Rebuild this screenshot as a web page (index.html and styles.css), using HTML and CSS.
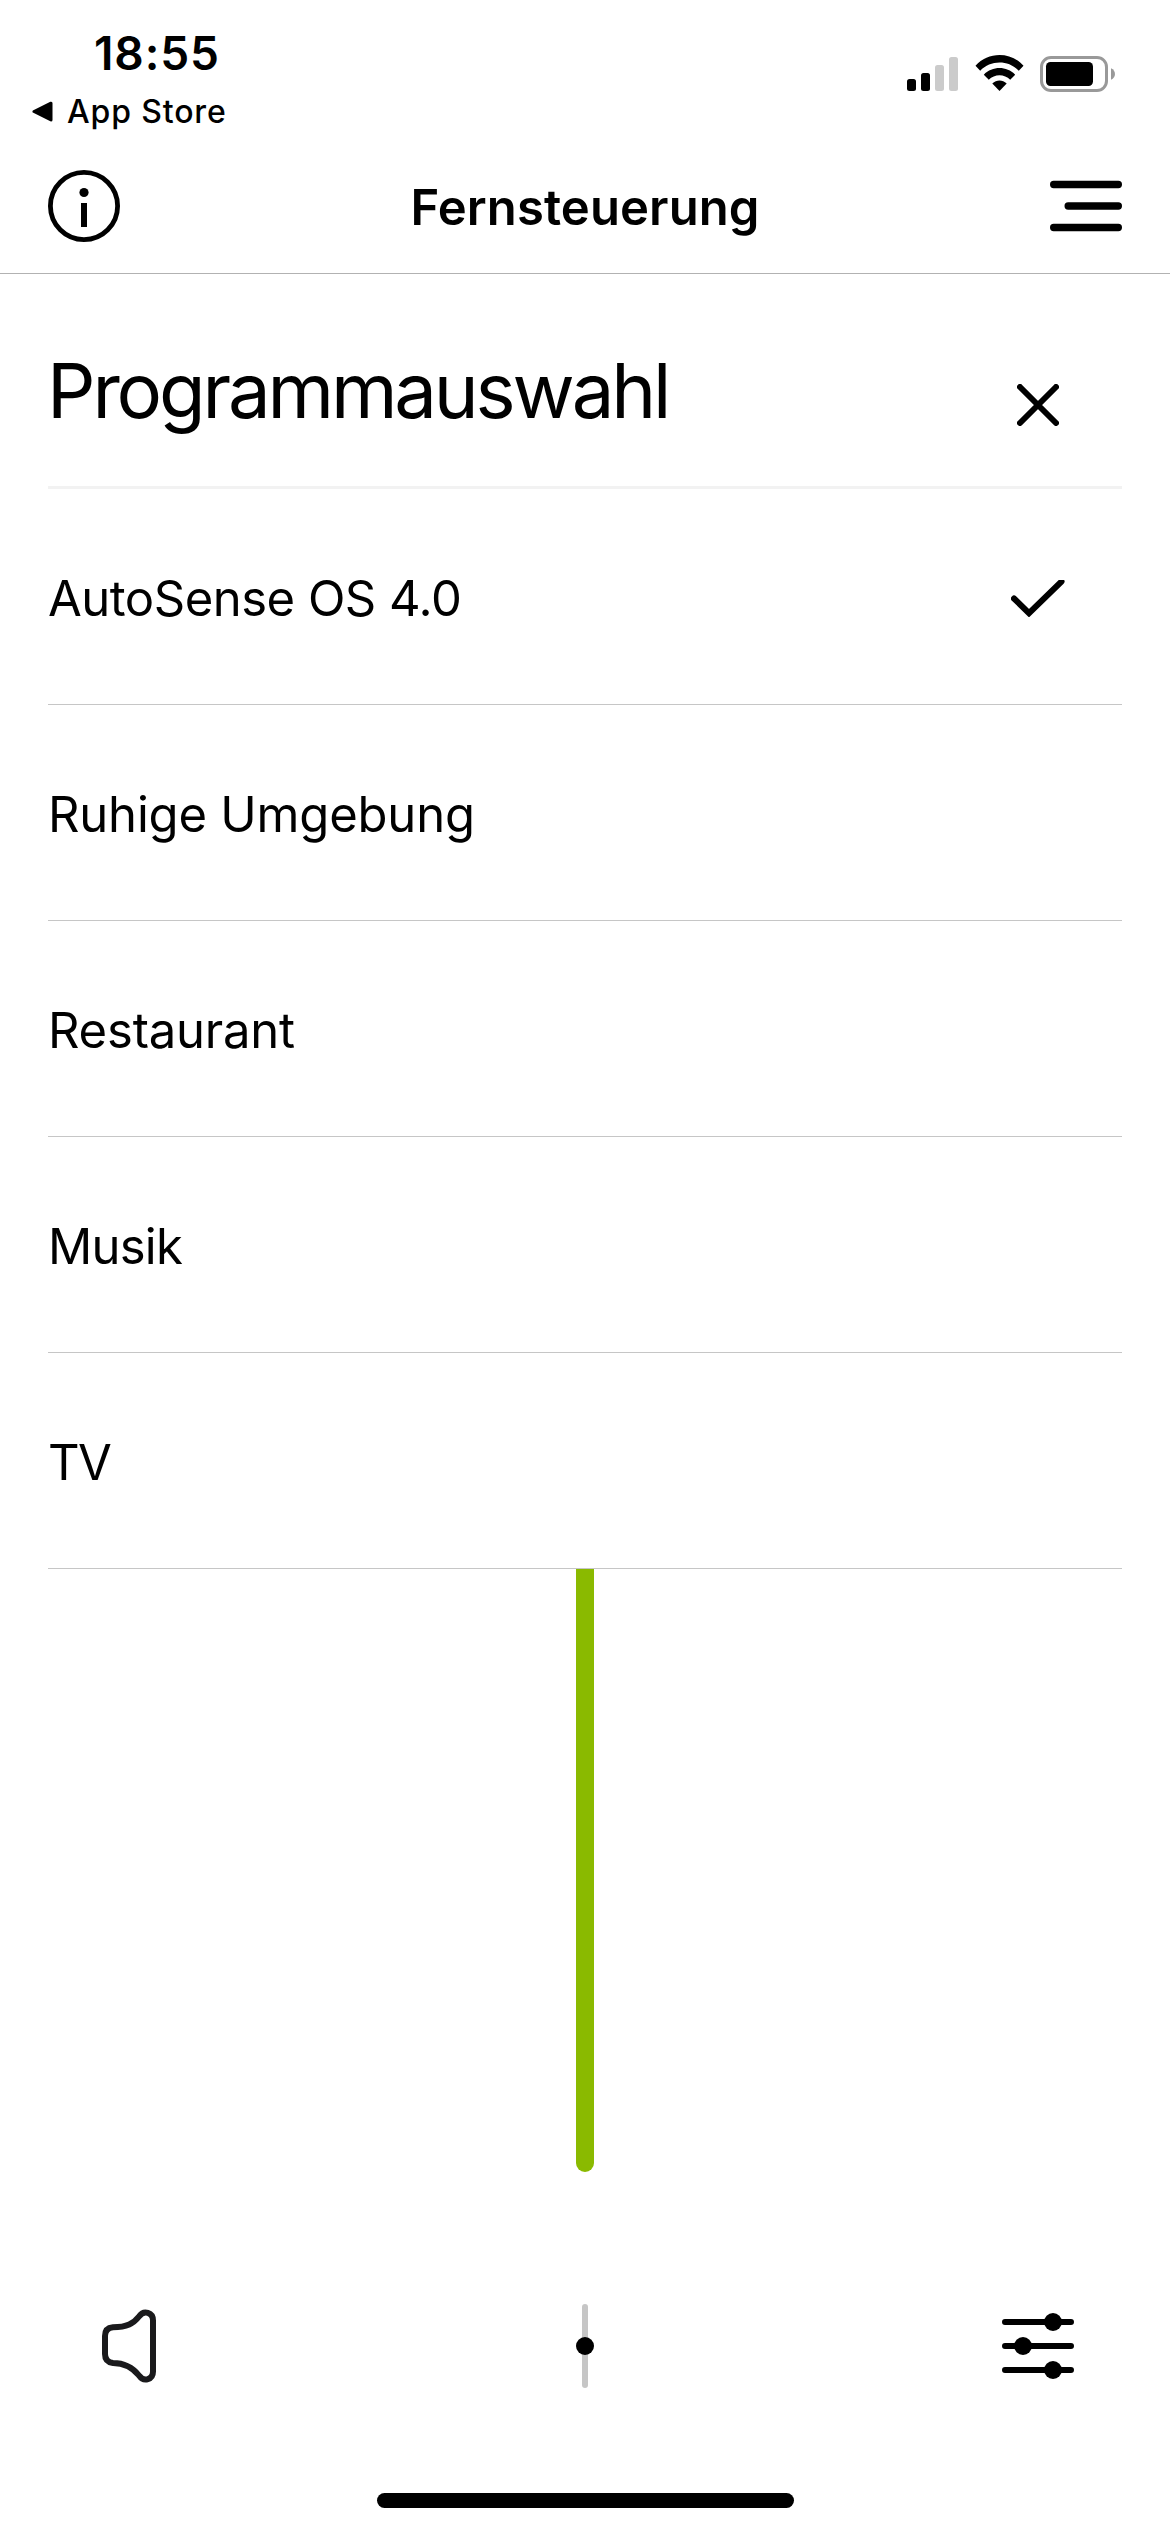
FILE: index.html
```html
<!DOCTYPE html>
<html lang="de">
<head>
<meta charset="utf-8">
<title>Fernsteuerung</title>
<link rel="stylesheet" href="styles.css">
</head>
<body>
<div class="screen">
  <div class="status">
    <div class="status-left">
      <div class="time">18:55</div>
      <div class="back">
        <svg class="back-arrow" width="22" height="22" viewBox="0 0 22 22"><path d="M2 10.500 L19 2.200 V19 Z" stroke="#000" stroke-width="3" stroke-linejoin="round"/></svg>
        <span>App Store</span>
      </div>
    </div>
    <div class="status-right">
      <svg width="51" height="34" viewBox="0 0 51 34">
        <rect x="0" y="22" width="9" height="12" rx="2.500"/>
        <rect x="14" y="16" width="9" height="18" rx="2.500"/>
        <rect x="28" y="8" width="9" height="26" rx="2.500" fill="#cbcbcb"/>
        <rect x="42" y="0" width="9" height="34" rx="2.500" fill="#cbcbcb"/>
      </svg>
      <svg class="wifi" width="49" height="36" viewBox="0 0 49 36">
        <path d="M0.500 10.700 C13 -3.500 36 -3.500 48.500 10.700 L43.800 15.800 C33.500 4.800 15.500 4.800 5.200 15.800 Z"/>
        <path d="M8.800 19.700 C17.500 10.800 31.500 10.800 40.200 19.700 L35.200 24.800 C29.500 18.700 19.500 18.700 13.800 24.800 Z"/>
        <path d="M17.300 28.400 C21.500 24.400 27.500 24.400 31.700 28.400 L24.500 36 Z"/>
      </svg>
      <svg width="75" height="36" viewBox="0 0 75 36">
        <rect x="1.500" y="1.500" width="65" height="33" rx="9.500" fill="none" stroke="#999" stroke-width="3"/>
        <rect x="6" y="6" width="47" height="24" rx="4.500"/>
        <path d="M71 12.300 C76.300 14.500 76.300 21.500 71 23.700 Z" fill="#999"/>
      </svg>
    </div>
  </div>

  <header class="header">
    <svg class="info" width="72" height="72" viewBox="0 0 72 72">
      <circle cx="36" cy="36" r="33.600" fill="none" stroke="#000" stroke-width="4.800"/>
      <circle cx="36" cy="22.500" r="4.600"/>
      <rect x="33" y="33" width="6" height="24"/>
    </svg>
    <div class="header-title">Fernsteuerung</div>
    <svg class="menu" width="72" height="52" viewBox="0 0 72 52" stroke="#000" stroke-width="7.400" stroke-linecap="round">
      <path d="M3.700 4.500 H68.300 M18.200 26 H68.300 M3.700 47.500 H68.300"/>
    </svg>
  </header>

  <main>
    <div class="panel-head">
      <h1>Programmauswahl</h1>
      <svg class="close" width="42" height="42" viewBox="0 0 42 42" stroke="#000" stroke-width="6" stroke-linecap="round"><path d="M3 3 L39 39 M39 3 L3 39"/></svg>
    </div>
    <ul class="programs">
      <li><span>AutoSense OS 4.0</span>
        <svg class="check" width="54" height="37" viewBox="0 0 54 37" fill="none" stroke="#000" stroke-width="6" stroke-linecap="round"><path d="M3 18.500 L18 33.200 L50.500 1.500"/></svg>
      </li>
      <li class="text-loose"><span>Ruhige Umgebung</span></li>
      <li class="text-loose"><span>Restaurant</span></li>
      <li class="text-tight"><span>Musik</span></li>
      <li class="text-tighter"><span>TV</span></li>
    </ul>
    <div class="volume"></div>
  </main>

  <div class="toolbar">
    <svg class="speaker" width="54" height="74" viewBox="0 0 54 74" fill="none" stroke="#1a1a1c" stroke-width="6">
      <path d="M11 18.300 C25 18.300 31.500 14.500 37 7.500 C42 0.500 51 3.500 51 11.500 V62.500 C51 70.500 42 73.500 37 66.500 C31 59 23 54 11 54 Q3 53 3 45 V27 Q3 19 11 18.300 Z"/>
    </svg>
    <svg class="balance" width="18" height="84" viewBox="0 0 18 84">
      <rect x="6" width="6" height="84" rx="3" fill="#c6c6c6"/>
      <circle cx="9" cy="42" r="9"/>
    </svg>
    <svg class="sliders" width="72" height="66" viewBox="0 0 72 66">
      <path d="M3 9 H69 M3 33 H69 M3 57 H69" stroke="#000" stroke-width="6" stroke-linecap="round"/>
      <circle cx="51" cy="9" r="9"/><circle cx="21" cy="33" r="9"/><circle cx="51" cy="57" r="9"/>
    </svg>
  </div>
  <div class="home"></div>
</div>
</body>
</html>
```

FILE: styles.css
```css
* { box-sizing: border-box; }

body {
  margin: 0;
  background: #fff;
  color: #000;
  font-family: Inter, "Liberation Sans", sans-serif;
}

svg { display: block; flex: none; }

.screen {
  width: 1170px;
  height: 2532px;
  display: flex;
  flex-direction: column;
  overflow: hidden;
}

.status {
  height: 139px;
  display: flex;
  justify-content: space-between;
  padding: 25px 55px 0 32px;
}

.time {
  padding-left: 62px;
  font-size: 46px;
  font-weight: 600;
  line-height: 56px;
  letter-spacing: 0.9px;
}

.back {
  display: flex;
  align-items: center;
  gap: 13px;
  margin-top: 11px;
  font-size: 32px;
  font-weight: 500;
  line-height: 39px;
  letter-spacing: 0.85px;
}

.status-right {
  display: flex;
  align-items: flex-end;
  height: 67px;
  padding-bottom: 0;
}

.status-right svg:first-child { margin-bottom: 1px; }
.status-right .wifi { margin: 0 16px 1px 17px; }

.header {
  height: 135px;
  display: grid;
  grid-template-columns: 1fr auto 1fr;
  align-items: center;
  padding: 0 48px;
  border-bottom: 1px solid #b2b2b2;
}

.header-title {
  padding-top: 3px;
  font-size: 49px;
  font-weight: 600;
  line-height: 59px;
  letter-spacing: 0.1px;
}

.menu { justify-self: end; }

main { flex: 1; padding: 0 48px; }

.panel-head {
  height: 215px;
  display: flex;
  justify-content: space-between;
  padding: 70px 63px 0 0;
  border-bottom: 3px solid #f2f2f2;
}

h1 {
  margin: 0 0 0 -1px;
  font-size: 76px;
  font-weight: 400;
  line-height: 92px;
  letter-spacing: -3.15px;
}

.close { margin-top: 40px; }

.programs {
  margin: 0;
  padding: 0;
  list-style: none;
  font-size: 49px;
  line-height: 59px;
  letter-spacing: -0.5px;
}

.programs li {
  height: 216px;
  display: flex;
  align-items: center;
  justify-content: space-between;
  padding: 4px 57px 0 0;
  border-bottom: 1px solid #c6c6c6;
}

.programs .text-loose { letter-spacing: -0.2px; }
.programs .text-tight { letter-spacing: -0.75px; }
.programs .text-tighter { letter-spacing: -1.6px; }

.volume {
  width: 18px;
  height: 603px;
  margin: 0 auto;
  border-radius: 0 0 9px 9px;
  background: #8aba00;
}

.toolbar {
  height: 84px;
  display: grid;
  grid-template-columns: 1fr auto 1fr;
  align-items: center;
  padding: 0 96px 0 102px;
  margin-bottom: 105px;
}

.balance { margin-left: -6px; }
.sliders { justify-self: end; }

.home {
  width: 417px;
  height: 15px;
  margin: 0 auto 24px;
  border-radius: 8px;
  background: #000;
}
```
